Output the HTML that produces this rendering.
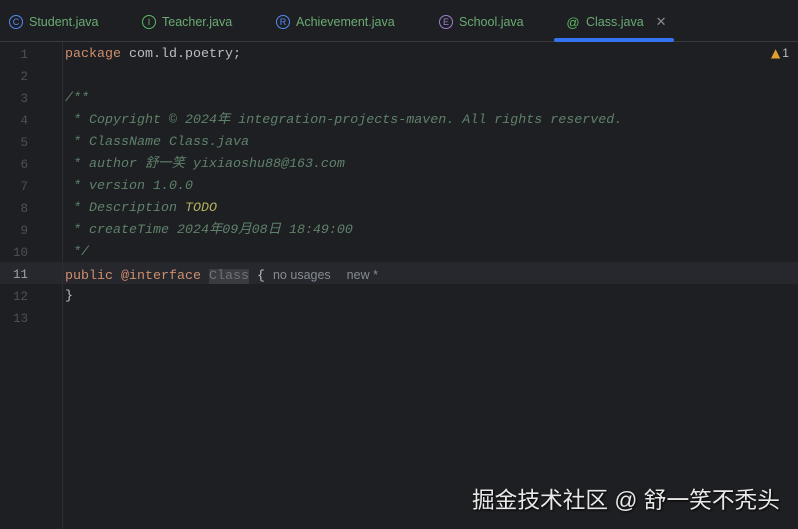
<!DOCTYPE html>
<html><head><meta charset="utf-8"><style>
*{margin:0;padding:0;box-sizing:border-box}
body{width:798px;height:529px;background:#1e1f22;overflow:hidden;position:relative;font-family:"Liberation Mono","Noto Sans CJK SC",monospace}
.tabs{position:absolute;left:0;top:0;width:798px;height:42px;border-bottom:1px solid #393b40;font-family:"Liberation Sans",sans-serif;font-size:12.5px}
.tab{position:absolute;top:13px;height:18px;display:flex;align-items:center;color:#6aab73}
.ic{width:14px;height:14px;border-radius:50%;border:1.3px solid;display:inline-flex;align-items:center;justify-content:center;font-size:9px;margin-right:6px}
.ul{position:absolute;left:554px;top:38px;width:120px;height:4px;background:#3574f0;border-radius:2px}
.gut{position:absolute;left:62px;top:42px;width:1px;height:487px;background:#2b2d30}
.ln{position:absolute;left:0;width:28px;text-align:right;color:#4b5059;font-size:12.5px}
.code{position:absolute;left:65px;font-size:13.33px;color:#bcbec4;white-space:pre;line-height:22px}
.row{position:absolute;left:0;height:22px;line-height:22px;width:798px}
.k{color:#cf8e6d}.c{color:#5f826b;font-style:italic}.t{color:#b3ae60;font-style:italic}
.hl{position:absolute;left:0;top:262px;width:798px;height:22px;background:#26282e}
.hint{font-family:"Liberation Sans",sans-serif;font-size:12.5px;color:#868a91;font-style:normal}
.wm{position:absolute;left:472px;top:482px;font-family:"Liberation Sans","Noto Sans CJK SC",sans-serif;font-size:22.7px;color:#e8e8e8;text-shadow:1px 1px 2px #000;white-space:nowrap}
</style></head><body>
<div class="tabs">
 <div class="tab" style="left:9px"><span class="ic" style="border-color:#548af7;color:#548af7">C</span>Student.java</div>
 <div class="tab" style="left:142px"><span class="ic" style="border-color:#5fb865;color:#5fb865">I</span>Teacher.java</div>
 <div class="tab" style="left:276px"><span class="ic" style="border-color:#548af7;color:#548af7">R</span>Achievement.java</div>
 <div class="tab" style="left:439px"><span class="ic" style="border-color:#9b7fd1;color:#9b7fd1">E</span>School.java</div>
 <div class="tab" style="left:566px"><span class="ic" style="border:none;color:#5fb865;font-size:13px;width:14px">@</span>Class.java<span style="color:#868a91;margin-left:12px;font-size:13px">✕</span></div>
</div>
<div class="ul"></div>
<div class="hl"></div>
<div class="gut"></div>
<div style="position:absolute;left:771px;top:46px;color:#e0a030;font-size:12px;font-family:'DejaVu Sans',sans-serif">▲<span style="color:#bcbec4;font-family:'Liberation Sans';margin-left:2px">1</span></div>
<div style="position:absolute;top:44px;left:0;width:798px">
 <div class="row" style="top:0"><span class="ln">1</span><span class="code"><span class="k">package</span> com.ld.poetry;</span></div>
 <div class="row" style="top:22px"><span class="ln">2</span></div>
 <div class="row" style="top:44px"><span class="ln">3</span><span class="code c">/**</span></div>
 <div class="row" style="top:66px"><span class="ln">4</span><span class="code c"> * Copyright © 2024年 integration-projects-maven. All rights reserved.</span></div>
 <div class="row" style="top:88px"><span class="ln">5</span><span class="code c"> * ClassName Class.java</span></div>
 <div class="row" style="top:110px"><span class="ln">6</span><span class="code c"> * author 舒一笑 yixiaoshu88@163.com</span></div>
 <div class="row" style="top:132px"><span class="ln">7</span><span class="code c"> * version 1.0.0</span></div>
 <div class="row" style="top:154px"><span class="ln">8</span><span class="code c"> * Description <span class="t">TODO</span></span></div>
 <div class="row" style="top:176px"><span class="ln">9</span><span class="code c"> * createTime 2024年09月08日 18:49:00</span></div>
 <div class="row" style="top:198px"><span class="ln">10</span><span class="code c"> */</span></div>
 <div class="row" style="top:220px"><span class="ln" style="color:#a1a3ab">11</span><span class="code"><span class="k">public</span> <span class="k">@interface</span> <span style="background:#393b40;color:#6f737a">Class</span> { <span class="hint">no usages</span>  <span class="hint">new *</span></span></div>
 <div class="row" style="top:242px"><span class="ln">12</span><span class="code">}</span></div>
 <div class="row" style="top:264px"><span class="ln">13</span></div>
</div>
<div class="wm">掘金技术社区 @ 舒一笑不秃头</div>
</body></html>
